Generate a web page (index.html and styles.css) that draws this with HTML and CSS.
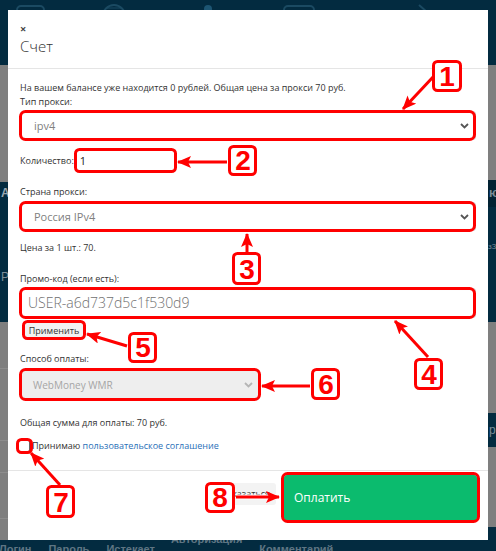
FILE: index.html
```html
<!DOCTYPE html>
<html lang="ru">
<head>
    <meta charset="UTF-8">
    <title>Счет</title>
    <link rel="stylesheet" href="styles.css">
</head>
<body>
<div class="page">
    <!-- page behind the dialog -->
    <div class="topbar">
        <svg width="496" height="10" viewBox="0 0 496 10">
            <rect x="17" y="6" width="27" height="20" rx="4" fill="none" stroke="#1b4a62" stroke-width="2"/>
            <circle cx="114" cy="16" r="11" fill="none" stroke="#1b4a62" stroke-width="2"/>
            <path d="M106 8 L122 8 M104 12 L124 12" stroke="#1b4a62" stroke-width="1"/>
            <circle cx="208" cy="9" r="4" fill="#1d5572"/>
            <rect x="284" y="6" width="30" height="20" rx="4" fill="none" stroke="#1b4a62" stroke-width="2"/>
            <path d="M419 5 L427 12" stroke="#1b4a62" stroke-width="2"/>
        </svg>
    </div>

    <div class="middle">
        <div class="strip">
            <div class="band navy h55"></div>
            <div class="band grey h117"></div>
            <div class="band navy h140 strip-text">
                <span class="bg-a">A</span>
                <span class="bg-p">P</span>
            </div>
            <div class="band grey h218 lined"></div>
        </div>

        <!-- Dialog -->
        <div class="modal">
            <div class="modal-header">
                <div class="close">&times;</div>
                <h4 class="modal-title">Счет</h4>
            </div>

            <div class="modal-body">
                <p class="line">На вашем балансе уже находится 0 рублей. Общая цена за прокси 70 руб.</p>

                <div class="line">Тип прокси:</div>
                <div class="select s1">
                    <span>ipv4</span>
                    <svg class="chev" width="9" height="6" viewBox="0 0 9 6"><path d="M1 1 L4.5 4.5 L8 1" fill="none" stroke="#555" stroke-width="1.8"/></svg>
                </div>

                <div class="qty-row">
                    <span>Количество:</span>
                    <div class="qty-input">1</div>
                </div>

                <div class="line mt13">Страна прокси:</div>
                <div class="select s2">
                    <span>Россия IPv4</span>
                    <svg class="chev" width="9" height="6" viewBox="0 0 9 6"><path d="M1 1 L4.5 4.5 L8 1" fill="none" stroke="#555" stroke-width="1.8"/></svg>
                </div>

                <div class="line mt10">Цена за 1 шт.: 70.</div>

                <div class="line mt17">Промо-код (если есть):</div>
                <div class="promo">USER-a6d737d5c1f530d9</div>
                <div class="apply">Применить</div>

                <div class="line mt12">Способ оплаты:</div>
                <div class="select s3 disabled">
                    <span>WebMoney WMR</span>
                    <svg class="chev" width="9" height="6" viewBox="0 0 9 6"><path d="M1 1 L4.5 4.5 L8 1" fill="none" stroke="#b5b5b5" stroke-width="1.8"/></svg>
                </div>

                <div class="line mt16">Общая сумма для оплаты: 70 руб.</div>

                <div class="agree">
                    <span class="checkbox"></span>
                    <span>Принимаю <a class="link">пользовательское соглашение</a></span>
                </div>
            </div>

            <div class="modal-footer">
                <div class="btn-cancel">Отказаться</div>
                <div class="btn-pay">Оплатить</div>
            </div>
        </div>

        <div class="strip">
            <div class="band navy h55"></div>
            <div class="band grey h115"></div>
            <div class="band dark h27 strip-text"><span class="bg-r1">ю</span></div>
            <div class="band navy h115 strip-text"><span class="bg-r2">з3</span></div>
            <div class="band grey h91"></div>
            <div class="band navy h34 strip-text"><span class="bg-r3">р</span></div>
            <div class="band grey h80"></div>
            <div class="band navy h13"></div>
        </div>
    </div>

    <div class="bottombar">
        <span class="col c1">Логин</span>
        <span class="col c2">Пароль</span>
        <span class="col c3">Истекает</span>
        <span class="col c4">Авторизация</span>
        <span class="col c5">Комментарий</span>
    </div>

    <!-- Red annotation layer -->
    <svg class="marks" width="496" height="551" viewBox="0 0 496 551">
        <defs>
            <marker id="head" markerUnits="userSpaceOnUse" markerWidth="14" markerHeight="12" refX="13" refY="6" orient="auto">
                <path d="M0 0 L14 6 L0 12 L3 6 Z" fill="#f00"/>
            </marker>
        </defs>
        <g fill="none" stroke="#f00" stroke-width="3">
            <rect x="20.5" y="111.5" width="454" height="28" rx="5"/>
            <rect x="75.5" y="149.5" width="100" height="22" rx="4"/>
            <rect x="20.5" y="202.5" width="454" height="28" rx="5"/>
            <rect x="20.5" y="288.5" width="454" height="29" rx="5"/>
            <rect x="23.5" y="321.5" width="61" height="17" rx="4"/>
            <rect x="20.5" y="369.5" width="239" height="30" rx="5"/>
            <rect x="17.5" y="439.5" width="14" height="13" rx="4"/>
            <rect x="282.5" y="473.5" width="196" height="48" rx="5"/>
        </g>
        <g stroke="#fff" stroke-width="5">
            <line x1="434" y1="76" x2="405" y2="107"/>
            <line x1="227" y1="162" x2="181" y2="162"/>
            <line x1="247" y1="252" x2="247" y2="237"/>
            <line x1="428" y1="357" x2="397" y2="323"/>
            <line x1="127" y1="346" x2="90" y2="335"/>
            <line x1="310" y1="386" x2="265" y2="386"/>
            <line x1="60" y1="485" x2="33" y2="455"/>
            <line x1="236" y1="497" x2="276" y2="497"/>
        </g>
        <g stroke="#f00" stroke-width="3" marker-end="url(#head)">
            <line x1="434" y1="76" x2="403" y2="109"/>
            <line x1="227" y1="162" x2="178" y2="162"/>
            <line x1="247" y1="252" x2="247" y2="234"/>
            <line x1="428" y1="357" x2="395" y2="321"/>
            <line x1="127" y1="346" x2="87" y2="334"/>
            <line x1="310" y1="386" x2="262" y2="386"/>
            <line x1="60" y1="485" x2="31" y2="453"/>
            <line x1="236" y1="497" x2="279" y2="497"/>
        </g>
        <g class="tag">
            <rect x="433.5" y="61.5" width="27" height="29" rx="4"/>
            <rect x="229.5" y="146.5" width="26" height="28" rx="4"/>
            <rect x="233.5" y="253.5" width="26" height="30" rx="4"/>
            <rect x="415.5" y="359.5" width="26" height="29" rx="4"/>
            <rect x="129.5" y="333.5" width="26" height="28" rx="4"/>
            <rect x="312.5" y="369.5" width="26" height="29" rx="4"/>
            <rect x="47.5" y="486.5" width="26" height="30" rx="4"/>
            <rect x="206.5" y="483.5" width="27" height="28" rx="4"/>
        </g>
        <g class="tag-num" text-anchor="middle">
            <text x="447" y="86">1</text>
            <text x="243" y="170">2</text>
            <text x="247" y="279">3</text>
            <text x="429" y="384">4</text>
            <text x="143" y="357">5</text>
            <text x="326" y="394">6</text>
            <text x="61" y="512">7</text>
            <text x="220" y="507">8</text>
        </g>
    </svg>
</div>
</body>
</html>
```

FILE: styles.css
```css
* {
    box-sizing: border-box;
}

body {
    margin: 0;
    background: #032b40;
    font-family: "Open Sans", "Liberation Sans", sans-serif;
    color: #333;
}

.page {
    position: relative;
    width: 496px;
    height: 551px;
    overflow: hidden;
}

/* Page behind the dialog */
.topbar {
    height: 10px;
    overflow: hidden;
    background: #032b40;
}

.topbar svg {
    display: block;
}

.middle {
    display: flex;
    height: 530px;
}

.strip {
    width: 8px;
    display: flex;
    flex-direction: column;
    overflow: hidden;
}

.band {
    flex: none;
}

.navy { background: #032b40; }
.grey { background: #7f7f7f; }
.dark { background: #022233; }

.h13 { height: 13px; }
.h27 { height: 27px; }
.h34 { height: 34px; }
.h55 { height: 55px; }
.h80 { height: 80px; }
.h91 { height: 91px; }
.h115 { height: 115px; }
.h117 { height: 117px; }
.h140 { height: 140px; }
.h218 { height: 218px; }

.lined {
    background:
        linear-gradient(#8d8d8d, #8d8d8d) 0 46px / 100% 1px no-repeat,
        linear-gradient(#8d8d8d, #8d8d8d) 0 118px / 100% 1px no-repeat,
        linear-gradient(#8d8d8d, #8d8d8d) 0 150px / 100% 1px no-repeat,
        linear-gradient(#8d8d8d, #8d8d8d) 0 196px / 100% 1px no-repeat,
        #7f7f7f;
}

.strip-text {
    font-family: "Liberation Sans", sans-serif;
    color: #7c8d98;
    font-size: 12px;
    line-height: 14px;
    white-space: nowrap;
}

.strip-text span {
    display: block;
}

.bg-a {
    margin: 4px 0 0 1px;
    font-weight: bold;
    color: #9aa7b0;
}

.bg-p {
    margin: 70px 0 0 1px;
}

.bg-r1 {
    margin: 6px 0 0 1px;
    font-weight: bold;
}

.bg-r2 {
    margin: 33px 0 0 0;
    font-size: 8px;
}

.bg-r3 {
    margin: 10px 0 0 1px;
}

.bottombar {
    height: 11px;
    overflow: hidden;
    display: flex;
    align-items: flex-start;
    font-family: "Liberation Sans", sans-serif;
    font-weight: bold;
    font-size: 11px;
    line-height: 13px;
    color: #5e7583;
    white-space: nowrap;
}

.col { margin-top: 3px; }
.c1 { margin-left: -1px; }
.c2 { margin-left: 17px; }
.c3 { margin-left: 17px; }
.c4 { margin-left: 16px; margin-top: -7px; }
.c5 { margin-left: 17px; }

/* Dialog */
.modal {
    width: 480px;
    background: #fff;
    display: flex;
    flex-direction: column;
}

.modal-header {
    padding: 12px;
    border-bottom: 1px solid #e5e5e5;
}

.close {
    font-size: 11px;
    line-height: 14px;
    font-weight: bold;
    color: #444;
}

.modal-title {
    margin: 0;
    font-size: 15px;
    line-height: 20px;
    font-weight: 300;
    color: #333;
}

.modal-body {
    flex: 1;
    padding: 12px 12px 0;
    font-size: 9px;
    line-height: 14px;
}

.line {
    margin: 0;
}

.mt10 { margin-top: 10px; }
.mt12 { margin-top: 12px; }
.mt13 { margin-top: 13px; }
.mt16 { margin-top: 16px; }
.mt17 { margin-top: 17px; }

.select {
    display: flex;
    align-items: center;
    justify-content: space-between;
    height: 29px;
    padding: 0 6px 0 13px;
    border: 1px solid #ccc;
    border-radius: 3px;
    box-shadow: inset 0 1px 1px rgba(0, 0, 0, 0.075);
    font-size: 11px;
    color: #808080;
}

.s1 { margin-top: 2px; }
.s2 { margin-top: 3px; }

.s3 {
    margin-top: 3px;
    width: 240px;
    height: 31px;
    padding-left: 12px;
    font-size: 10px;
}

.select.disabled {
    background: #eee;
    color: #a5a5a5;
}

.chev {
    display: block;
}

.qty-row {
    display: flex;
    align-items: center;
    gap: 1px;
    margin-top: 10px;
    height: 22px;
}

.qty-input {
    width: 101px;
    height: 22px;
    padding: 0 4px;
    border: 1px solid #8a8a8a;
    border-radius: 2px;
    font-size: 11px;
    line-height: 20px;
    color: #222;
}

.promo {
    margin-top: 2px;
    height: 30px;
    padding: 0 7px;
    border: 1px solid #ccc;
    border-radius: 3px;
    box-shadow: inset 0 1px 1px rgba(0, 0, 0, 0.075);
    font-size: 14px;
    font-weight: 300;
    line-height: 28px;
    color: #707070;
}

.apply {
    display: inline-block;
    margin: 3px 0 0 3px;
    width: 62px;
    height: 19px;
    background: #f2f2f2;
    border-radius: 3px;
    text-align: center;
    line-height: 19px;
    color: #333;
}

.agree {
    display: flex;
    align-items: center;
    gap: 2px;
    margin: 9px 0 0 -2px;
    height: 14px;
}

.checkbox {
    width: 12px;
    height: 12px;
    border: 1px solid #666;
    border-radius: 2px;
    background: #fff;
}

.link {
    color: #2a70b8;
}

.modal-footer {
    display: flex;
    justify-content: flex-end;
    align-items: flex-start;
    gap: 8px;
    padding: 4px 11px 19px;
    border-top: 1px solid #e5e5e5;
}

.btn-cancel {
    height: 22px;
    padding: 0 6px;
    margin-top: 8px;
    background: #f3f3f3;
    border-radius: 3px;
    font-size: 9px;
    line-height: 22px;
    color: #333;
}

.btn-pay {
    width: 193px;
    height: 46px;
    padding-left: 10px;
    background: #0bbb6e;
    border-radius: 3px;
    font-size: 12px;
    line-height: 46px;
    color: #fff;
}

/* Annotation layer */
.marks {
    position: absolute;
    top: 0;
    left: 0;
}

.tag rect {
    fill: #fff;
    stroke: #f00;
    stroke-width: 3;
}

.tag-num text {
    fill: #f00;
    font-family: "Liberation Sans", sans-serif;
    font-weight: bold;
    font-size: 28px;
}
```
